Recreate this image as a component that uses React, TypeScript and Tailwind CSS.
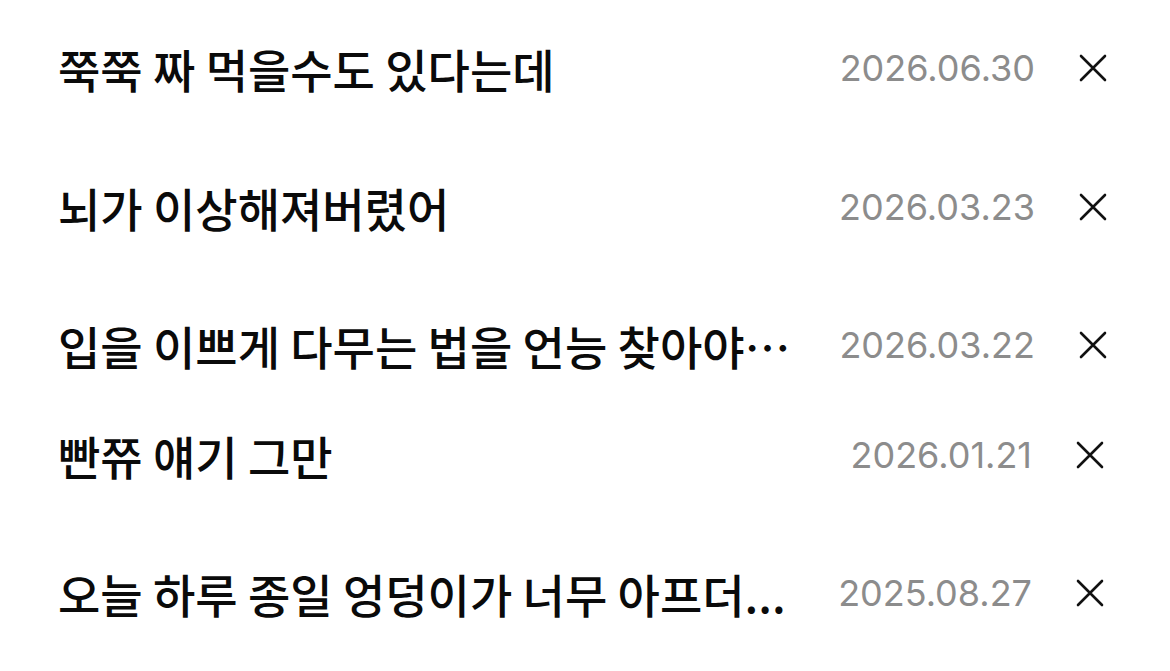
import React from "react";

type Row = { title: string; date: string; mt: string; pr: string };

const rows: Row[] = [
  { title: "쭉쭉 짜 먹을수도 있다는데", date: "2026.06.30", mt: "mt-[28px]", pr: "pr-[63px]" },
  { title: "뇌가 이상해져버렸어", date: "2026.03.23", mt: "mt-[59px]", pr: "pr-[63px]" },
  { title: "입을 이쁘게 다무는 법을 언능 찾아야…", date: "2026.03.22", mt: "mt-[58px]", pr: "pr-[63px]" },
  { title: "빤쮸 얘기 그만", date: "2026.01.21", mt: "mt-[30px]", pr: "pr-[66px]" },
  { title: "오늘 하루 종일 엉덩이가 너무 아프더...", date: "2025.08.27", mt: "mt-[58px]", pr: "pr-[66px]" },
];

function XIcon() {
  return (
    <svg width="28" height="28" viewBox="0 0 28 28" fill="none">
      <path d="M2 2 L26 26 M26 2 L2 26" stroke="#111" strokeWidth="2.6" strokeLinecap="round" />
    </svg>
  );
}

export default function App() {
  return (
    <div className="w-[1170px] h-[671px] bg-white overflow-hidden flex flex-col">
      {rows.map((r, i) => (
        <div key={i} className={`${r.mt} ${r.pr} h-[80px] flex items-center pl-[58px]`}>
          <div
            className="flex-1 text-[46px] font-medium text-[#0a0a0a] whitespace-nowrap leading-none"
            style={{ fontFamily: '"Noto Sans CJK KR", "Noto Sans", sans-serif' }}
          >
            {r.title}
          </div>
          <div
            className="text-[36px] text-[#8c8c8c] font-normal"
            style={{ fontFamily: 'Inter, "Liberation Sans", sans-serif' }}
          >
            {r.date}
          </div>
          <div className="ml-[44px] flex items-center justify-center w-[28px] h-[28px]">
            <XIcon />
          </div>
        </div>
      ))}
    </div>
  );
}
